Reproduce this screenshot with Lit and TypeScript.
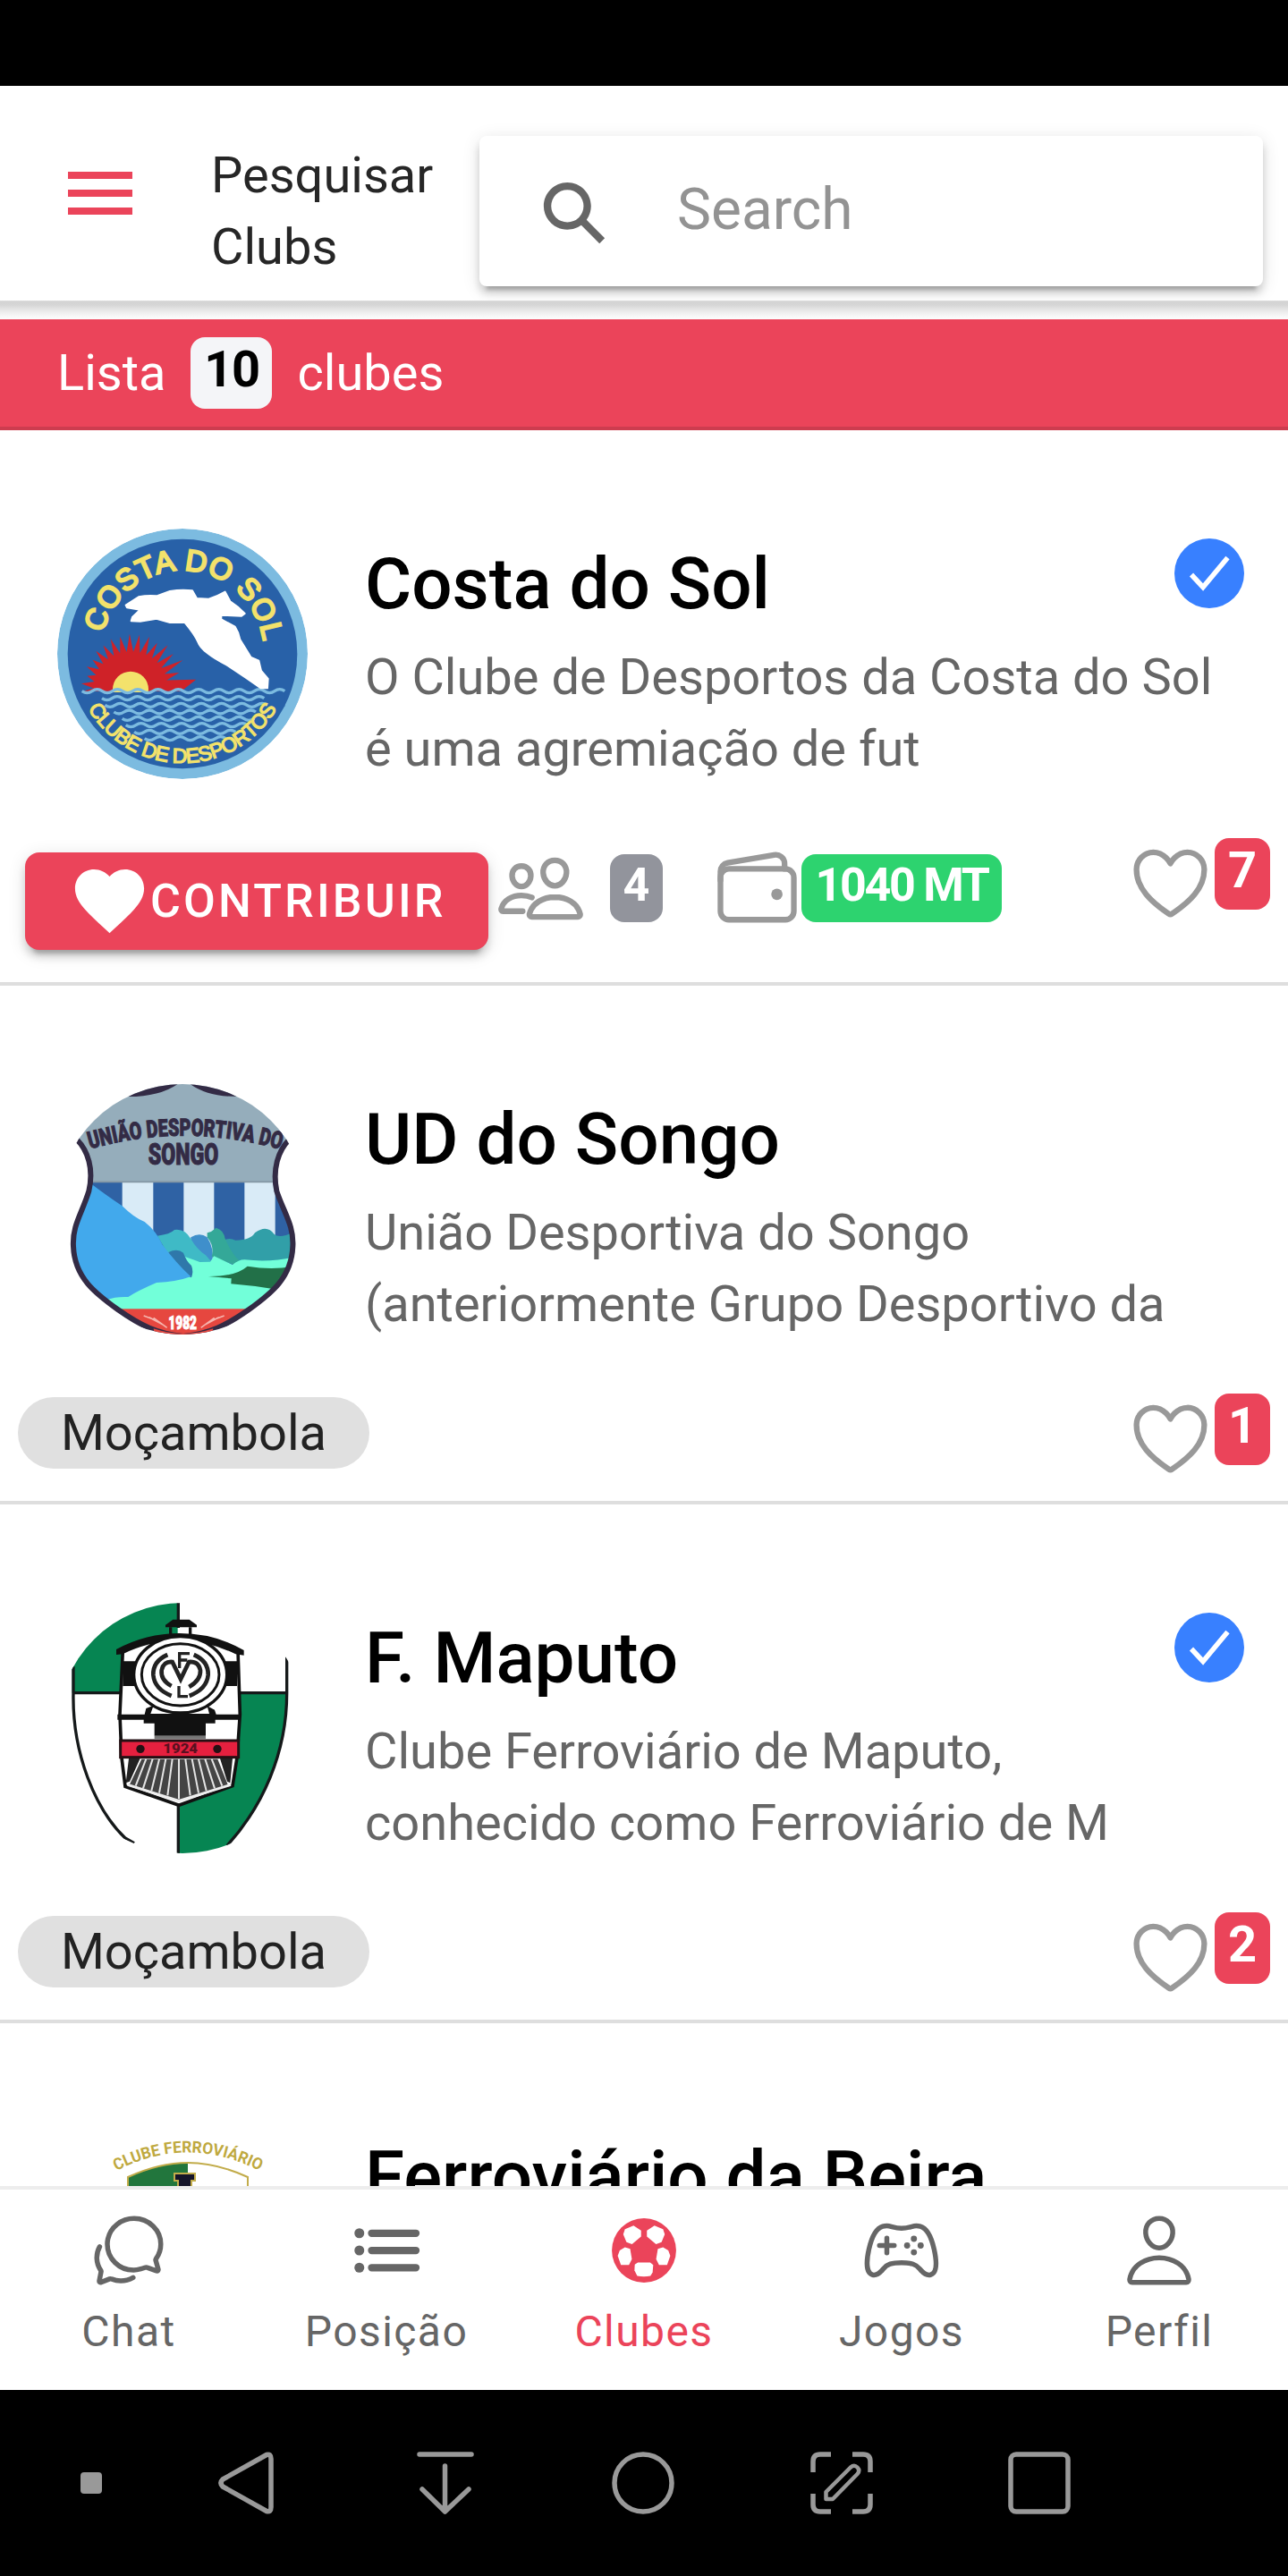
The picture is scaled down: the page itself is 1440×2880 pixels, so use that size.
import { LitElement, html, css, svg, nothing } from "lit";
import type { TemplateResult } from "lit";
import { customElement, property } from "lit/decorators.js";

interface Club {
  name: string;
  lines: string[];
  crest: TemplateResult;
  likes: string;
  verified?: boolean;
  league?: string;
  members?: string;
  balance?: string;
}

const HEART_OUTLINE = svg`<path d="M352.92 80C288 80 256 144 256 144s-32-64-96.92-64c-52.76 0-94.54 44.14-95.08 96.81-1.1 109.33 86.73 187.08 183 252.42a16 16 0 0018 0c96.26-65.34 184.09-143.09 183-252.42-.54-52.67-42.32-96.81-95.08-96.81z"/>`;

const PEOPLE = svg`
  <path d="M402 168c-2.93 40.67-33.1 72-66 72s-63.12-31.32-66-72c-3-42.31 26.37-72 66-72s69 30.46 66 72z"/>
  <path d="M336 304c-65.17 0-127.84 32.37-143.54 95.41-2.08 8.34 3.15 16.59 11.72 16.59h263.65c8.57 0 13.77-8.25 11.72-16.59C463.85 335.36 401.18 304 336 304z"/>
  <path d="M200 185.94c-2.34 32.48-26.72 58.06-53 58.06s-50.7-25.57-53-58.06C91.61 152.15 115.34 128 147 128s55.39 24.77 53 57.94z"/>
  <path d="M206 306c-18.05-8.27-37.93-11.45-59-11.45-52 0-102.1 25.85-114.65 76.2-1.65 6.66 2.53 13.25 9.37 13.25H154"/>`;

const WALLET = svg`
  <rect x="48" y="144" width="416" height="288" rx="48"/>
  <path d="M411.36 144v-30A50 50 0 00352 64.9L88.64 109.85A50 50 0 0048 159v49"/>
  <circle class="solid" cx="368" cy="288" r="32"/>`;

const CHAT = svg`
  <path d="M431 320.6c-1-3.6 1.2-8.6 3.3-12.2a33.68 33.68 0 012.1-3.1A162 162 0 00464 215c.3-92.2-77.5-167-173.7-167-83.9 0-153.9 57.1-170.3 132.9a160.7 160.7 0 00-3.7 34.2c0 92.3 74.8 169.1 171 169.1 15.3 0 35.9-4.6 47.2-7.7s22.5-7.2 25.4-8.3a26.44 26.44 0 019.3-1.7 26 26 0 0110.1 2l56.7 20.1a13.52 13.52 0 003.9 1 8 8 0 008-8 12.85 12.85 0 00-.5-2.7z"/>
  <path d="M66.46 232a146.23 146.23 0 006.39 152.67c2.31 3.49 3.61 6.19 3.21 8s-11.93 61.87-11.93 61.87a8 8 0 002.71 7.68A8.17 8.17 0 0072 464a7.26 7.26 0 002.91-.6l56.21-22a15.7 15.7 0 0112 .2c18.94 7.38 39.88 12 60.83 12A159.21 159.21 0 00284 432.11"/>`;

const LIST = svg`
  <path stroke-width="48" d="M160 144h288M160 256h288M160 368h288"/>
  <circle class="solid" cx="80" cy="144" r="32"/>
  <circle class="solid" cx="80" cy="256" r="32"/>
  <circle class="solid" cx="80" cy="368" r="32"/>`;

const BALL = svg`
  <circle class="solid" cx="256" cy="256" r="209"/>
  <g class="cut">
    <path d="M188 94L237 127V166L178 215L142 202L121 151L132 118Z"/>
    <path d="M324 94L275 127V166L334 215L370 202L391 151L380 118Z"/>
    <path d="M132 236L166 246L177 312L158 350H106L85 291L98 256Z"/>
    <path d="M380 236L346 246L335 312L354 350H406L427 291L414 256Z"/>
    <path d="M216 334H296L316 350L312 398L298 422Q256 430 212 422L194 386L196 348Z"/>
  </g>`;

const GAMEPAD = svg`
  <path d="M467.51 248.83c-18.4-83.18-45.69-136.24-89.43-149.17A91.5 91.5 0 00352 96c-26.89 0-48.11 16-96 16s-69.15-16-96-16a99.09 99.09 0 00-27.2 3.66C89 112.59 61.94 165.7 43.33 248.83c-19 84.91-15.56 152 21.58 164.88 26 9 49.25-9.61 71.27-37 25-31.2 55.79-40.8 119.82-40.8s93.62 9.6 118.66 40.8c22 27.41 46.11 45.79 71.42 37.16 41.02-14.01 40.44-79.13 21.43-165.04z"/>
  <circle class="solid" cx="292" cy="224" r="20"/>
  <circle class="solid" cx="336" cy="268" r="20"/>
  <circle class="solid" cx="336" cy="180" r="20"/>
  <circle class="solid" cx="380" cy="224" r="20"/>
  <path d="M160 176v96M208 224h-96"/>`;

const PERSON = svg`
  <path d="M344 144c-3.92 52.87-44 96-88 96s-84.15-43.12-88-96c-4-55 35-96 88-96s92 42 88 96z"/>
  <path d="M256 304c-87 0-175.3 48-191.64 138.6C62.39 453.52 68.57 464 80 464h352c11.44 0 17.62-10.48 15.65-21.4C431.3 352 343 304 256 304z"/>`;

const line = (shape: unknown, cls = "") =>
  html`<svg class="icon ${cls}" viewBox="0 0 512 512" fill="none" stroke="currentColor" stroke-width="32" stroke-linecap="round" stroke-linejoin="round">${shape}</svg>`;

/* Sun rays: spikes spread over the upper half circle. */
function rays(cx: number, cy: number): string {
  const tips = [222, 172, 200, 185, 192, 178, 186, 183, 184, 178, 180, 172, 172, 160, 165, 152, 166];
  const n = tips.length;
  const pts: string[] = [`${cx + 170},${cy + 8}`];
  tips.forEach((r, i) => {
    const a = ((8 + (i * 166) / (n - 1)) * Math.PI) / 180;
    const b = ((8 + ((i + 0.5) * 166) / (n - 1)) * Math.PI) / 180;
    pts.push(`${(cx + r * Math.cos(a)).toFixed(1)},${(cy - r * Math.sin(a)).toFixed(1)}`);
    pts.push(`${(cx + 124 * Math.cos(b)).toFixed(1)},${(cy - 124 * Math.sin(b)).toFixed(1)}`);
  });
  pts.push(`${cx - 160},${cy + 8}`);
  return pts.join(" ");
}

function wave(x1: number, x2: number, y: number): string {
  let d = `M${x1} ${y}`;
  let up = true;
  for (let x = x1; x < x2; x += 34) {
    d += ` q17 ${up ? 12 : -12} 34 0`;
    up = !up;
  }
  return d;
}

const WAVES: [number, number, number][] = [
  [222, 755, 632], [232, 745, 655], [262, 735, 678], [290, 712, 700],
  [302, 690, 722], [330, 660, 745], [365, 620, 767],
];

const costa = html`<svg class="crest" viewBox="72 63 840 840">
  <circle cx="492" cy="483" r="420" fill="#7cbbe0"/>
  <circle cx="492" cy="483" r="385" fill="#2861a8"/>
  <polygon points=${rays(318, 600)} fill="#cf2228"/>
  <circle cx="318" cy="602" r="60" fill="#f3e26b"/>
  <path d="M150 612H835V660H150Z" fill="#2861a8"/>
  <g fill="none" stroke="#7cbbe0" stroke-width="10">
    <path d="${wave(155, 815, 608)}"/>
    ${WAVES.map(([a, b, y]) => svg`<path d=${wave(a, b, y)}/>`)}
  </g>
  <path fill="#fff" stroke="#fff" stroke-width="6" stroke-linejoin="round" d="M302 320L345 292Q375 286 405 289L450 273Q490 266 525 271L540 297L580 299Q610 290 635 275L652 307Q680 325 701 348L690 356L622 353L622 367L668 392Q680 410 685 435L722 495L748 506L756 540L779 567L777 598L755 598L700 560L640 520Q600 500 575 480Q550 460 545 445Q535 420 500 378L450 378L405 365L350 374L320 373L324 360L350 335L306 328Z"/>
  <path id="costa-top" fill="none" d="M226 414A273 273 0 0 1 764 455"/>
  <path id="costa-low" fill="none" d="M175 666A366 366 0 0 0 809 666"/>
  <g fill="#f3e26b" font-family="Liberation Sans, Arial, sans-serif" stroke="#f3e26b">
    <text font-size="100" stroke-width="7" textLength="760"><textPath href="#costa-top" textLength="760">COSTA DO SOL</textPath></text>
    <text font-size="69" stroke-width="4" textLength="766"><textPath href="#costa-low" textLength="766">CLUBE DE DESPORTOS</textPath></text>
  </g>
</svg>`;

const SHIELD = "M0 160L108 252C145 290 165 350 148 425C125 500 92 540 96 610C100 715 170 768 245 822C320 875 380 905 465 912C550 905 610 875 685 822C760 768 828 715 832 610C836 540 803 500 778 425C763 350 783 290 820 252L930 160";

const songo = html`<svg class="crest" viewBox="42 66 840 840">
  <defs><clipPath id="songo-shield"><path d="${SHIELD}V0H0Z"/></clipPath></defs>
  <g clip-path="url(#songo-shield)">
    <rect width="930" height="930" fill="#95adbb"/>
    <rect x="90" y="395" width="760" height="300" fill="#2f62a4"/>
    <path fill="#d9ebf7" d="M260 395h104v300H260zM466 395h102v300H466zM670 395h103v300H670z"/>
    <path fill="#319fa8" d="M600 590Q620 580 640 590Q690 590 705 565Q745 535 770 570Q790 585 840 560V665H600Z"/>
    <path fill="#3f8fcb" d="M490 580Q520 562 545 580Q570 620 562 665H490Z"/>
    <path fill="#3fbac6" d="M378 575Q420 570 435 555Q470 550 490 585Q510 620 540 640L562 665H430Z"/>
    <path fill="#34a898" d="M545 565Q560 562 575 548Q600 555 605 585Q630 640 655 660L635 672L560 645Q570 610 545 580Z"/>
    <path fill="#72ffd9" d="M200 785L470 645Q500 655 520 663L555 662L568 643L630 672Q650 655 670 655Q760 665 840 645V850H200Z"/>
    <path fill="#2f78aa" d="M415 630Q445 615 465 632Q475 660 492 675Q500 695 492 715L420 690Z"/>
    <path fill="#42a9ec" d="M90 395L155 400Q200 435 260 475Q300 515 335 528Q375 560 395 605Q440 665 490 712Q440 730 375 732Q310 760 280 780Q240 778 205 790L90 790Z"/>
    <path fill="#227048" d="M548 711Q640 712 680 677Q760 690 830 678L780 755Q700 742 625 736L626 718Z"/>
    <rect x="150" y="820" width="630" height="110" fill="#e6473f"/>
    <path d="M150 394H790" stroke="#8496a4" stroke-width="5"/>
    <g stroke="#f6b5ae" stroke-width="5"><path d="M332 843l48 18M350 848l45 24M365 850l45 33M602 843l-48 18M584 848l-45 24M569 850l-45 33"/></g>
  </g>
  <g fill="none" stroke="#332b45" stroke-width="18"><path d="${SHIELD}"/></g>
  <path fill="#332b45" d="M262 108Q380 112 446 66H250ZM668 108Q550 112 488 66H690Z"/>
  <path fill="#e6473f" d="M365 886Q465 920 565 886L560 912H370Z"/>
  <path id="songo-arc" fill="none" d="M152 284Q465 194 786 284"/>
  <g fill="#332b45" stroke="#332b45" stroke-width="3" font-family="Roboto, sans-serif" font-weight="900">
    <text font-size="80" textLength="648" lengthAdjust="spacingAndGlyphs"><textPath href="#songo-arc" textLength="648" lengthAdjust="spacingAndGlyphs">UNIÃO DESPORTIVA DO</textPath></text>
    <text x="347" y="337" font-size="98" textLength="236" lengthAdjust="spacingAndGlyphs">SONGO</text>
  </g>
  <text x="415" y="887" fill="#fff" stroke="#fff" stroke-width="3" font-family="Roboto, sans-serif" font-weight="900" font-size="60" textLength="95" lengthAdjust="spacingAndGlyphs">1982</text>
</svg>`;

const maputo = html`<svg class="crest" viewBox="42 66 840 840">
  <path fill="#068552" d="M42 66H446V368H92V290L42 290Z"/>
  <path fill="#068552" d="M446 368H810C812 560 730 740 615 880L600 910H446Z"/>
  <g fill="none" stroke="#15191a" stroke-width="10">
    <path d="M96 280V370C92 570 170 760 270 855L300 872"/>
    <path d="M812 225V370C812 570 730 750 612 880"/>
    <path d="M96 368H262M650 368H812M448 40V150M448 740V920"/>
  </g>
  <path fill="#fff" stroke="#111" stroke-width="11" d="M262 225L340 192Q450 170 570 192L648 225L655 440L645 585L630 680L450 745L270 682L258 585L252 440Z"/>
  <path fill="#111" d="M240 222Q340 168 452 168Q570 168 668 225V242L640 238Q560 198 452 190Q340 198 262 238L240 240ZM262 262H312V345H262ZM598 262H645V345H598ZM405 140L430 122H485L510 140V148H405Z"/>
  <path fill="none" stroke="#111" stroke-width="10" d="M422 148V180M488 148V180"/>
  <ellipse cx="455" cy="307" rx="156" ry="128" fill="#fff" stroke="#111" stroke-width="10"/>
  <ellipse cx="455" cy="307" rx="130" ry="104" fill="none" stroke="#111" stroke-width="9"/>
  <g fill="none" stroke="#222" stroke-width="14">
    <path d="M412 240Q362 262 364 308Q368 355 425 378M500 240Q550 262 548 308Q544 355 485 378"/>
    <path d="M425 345Q388 325 392 292Q398 262 428 264L456 322L484 264Q516 262 522 292Q524 325 484 348"/>
    <path stroke-width="10" d="M452 285V236H486M454 258H478M450 345V380H480"/>
  </g>
  <path fill="#111" d="M340 420L365 410L355 438H552L545 412L570 425L575 440H655V458H572V470H540V512H368V470H332V458H244V440H335Z"/>
  <path fill="#777" d="M368 512H540V522H368Z"/>
  <rect x="254" y="528" width="396" height="56" fill="#e6203f" stroke="#251014" stroke-width="9"/>
  <circle cx="321" cy="556" r="14" fill="#251014"/><circle cx="579" cy="556" r="14" fill="#251014"/>
  <text x="397" y="571" font-family="Roboto, sans-serif" font-weight="900" font-size="44" fill="#5a1020" textLength="116" lengthAdjust="spacingAndGlyphs">1924</text>
  <path fill="#222" d="M282 588H320L285 665L272 670ZM588 588H630L622 670L612 665Z"/>
  <path fill="#444" d="M325 590H580L615 678L450 728L285 675Z"/>
  <g stroke="#e4e4e4" stroke-width="6"><path d="M340 590L305 680M362 590L330 688M384 590L358 696M406 590L384 704M428 590L412 712M450 590V724M472 590L488 712M494 590L516 704M516 590L542 696M538 590L570 688M560 590L595 680"/></g>
  <path fill="none" stroke="#eee" stroke-width="9" d="M278 676L450 730L624 676"/>
</svg>`;

const beira = html`<svg class="crest" viewBox="64 2372 280 280">
  <path fill="#fff" d="M143 2434Q178 2418 210 2418Q242 2418 277 2434V2520H143Z"/>
  <path fill="#22763d" d="M143 2434Q178 2418 210 2418V2520H143Z"/>
  <path fill="none" stroke="#c2ac4b" stroke-width="2" d="M143 2520V2434Q178 2418 210 2418Q242 2418 277 2434V2520"/>
  <path fill="#15152a" stroke="#c2ac4b" stroke-width="2" d="M195 2430H218V2438H214V2480H199V2438H195Z"/>
  <path id="beira-arc" fill="none" d="M130 2427Q210 2386 290 2427"/>
  <text fill="#bfa93f" font-family="Roboto, sans-serif" font-weight="700" font-size="18" textLength="167" lengthAdjust="spacingAndGlyphs"><textPath href="#beira-arc" textLength="167" lengthAdjust="spacingAndGlyphs">CLUBE FERROVIÁRIO</textPath></text>
</svg>`;

const CLUBS: Club[] = [
  {
    name: "Costa do Sol",
    lines: ["O Clube de Desportos da Costa do Sol", "é uma agremiação de fut"],
    crest: costa, likes: "7", verified: true, members: "4", balance: "1040 MT",
  },
  {
    name: "UD do Songo",
    lines: ["União Desportiva do Songo", "(anteriormente Grupo Desportivo da"],
    crest: songo, likes: "1", league: "Moçambola",
  },
  {
    name: "F. Maputo",
    lines: ["Clube Ferroviário de Maputo,", "conhecido como Ferroviário de M"],
    crest: maputo, likes: "2", verified: true, league: "Moçambola",
  },
  { name: "Ferroviário da Beira", lines: [], crest: beira, likes: "" },
];

const TABS = [
  { label: "Chat", icon: CHAT },
  { label: "Posição", icon: LIST },
  { label: "Clubes", icon: BALL, active: true },
  { label: "Jogos", icon: GAMEPAD },
  { label: "Perfil", icon: PERSON },
];

@customElement("club-item")
export class ClubItem extends LitElement {
  @property({ attribute: false }) club!: Club;

  static styles = css`
    :host { display: flex; flex-direction: column; flex: none; box-sizing: border-box; height: 580px; border-bottom: 4px solid #dedede; background: #fff; }
    :host(.tall) { height: 621px; }
    .top { display: flex; align-items: flex-start; box-sizing: border-box; height: 456px; flex: none; padding: 110px 49px 0 64px; }
    .crest { display: block; flex: none; width: 280px; height: 280px; border-radius: 50%; overflow: hidden; }
    .text { margin: 14px 0 0 64px; white-space: nowrap; width: 905px; flex: none; }
    .name { font-size: 80px; font-weight: 500; line-height: 96px; color: #000; }
    .desc { margin-top: 16px; font-size: 56px; line-height: 80px; color: #666; }
    .check { flex: none; width: 78px; height: 78px; margin-top: 11px; }
    .row { display: flex; align-items: flex-start; padding: 0 20px; }
    .icon { display: block; flex: none; width: 101px; height: 101px; color: #999; }
    .solid { fill: currentColor; stroke: none; }
    .members { margin: 6px 27px 0 8px; }
    .wallet { margin: 6px 0 0 55px; }
    .like { margin-left: auto; margin-right: -1px; }
    .contribute { display: flex; align-items: center; box-sizing: border-box; flex: none; width: 518px; height: 109px; margin: 16px 0 0 8px; padding-left: 47px; border-radius: 16px; background: #eb445a; color: #fff; font-size: 52px; font-weight: 500; letter-spacing: 3.12px;
      box-shadow: 0 12px 4px -8px rgba(0,0,0,.2), 0 8px 8px rgba(0,0,0,.14), 0 4px 20px rgba(0,0,0,.12); }
    .heart { display: block; width: 95px; height: 95px; margin-right: -2px; }
    .badge { box-sizing: border-box; flex: none; height: 80px; width: 62px; border-radius: 16px; text-align: center; color: #fff; background: #eb445a; font-size: 56px; font-weight: 700; line-height: 72px; white-space: nowrap; }
    .small { height: 76px; font-size: 52px; line-height: 69px; margin-top: 18px; }
    .gray { background: #92949c; width: 59px; }
    .green { background: #2dd36f; width: 224px; margin-left: -1px; letter-spacing: -2.3px; }
    .chip { box-sizing: border-box; height: 80px; width: 393px; margin-top: 4px; border-radius: 40px; background: #e0e0e0; color: #222; font-size: 56px; line-height: 80px; text-align: center; }
  `;

  render() {
    const c = this.club;
    return html`
      <div class="top">
        ${c.crest}
        <div class="text">
          <div class="name">${c.name}</div>
          <div class="desc">${c.lines.map((l) => html`<div>${l}</div>`)}</div>
        </div>
        ${c.verified
          ? html`<svg class="check" viewBox="0 0 78 78"><circle cx="39" cy="39" r="39" fill="#3880ff"/><path d="M19 40.5L32 54.5L59.5 21.5" fill="none" stroke="#fff" stroke-width="5.6"/></svg>`
          : nothing}
      </div>
      ${c.likes
        ? html`<div class="row">
            ${c.balance
              ? html`<div class="contribute">
                    <svg class="heart" viewBox="0 0 512 512" fill="currentColor"><path d="M256 448l-30.164-27.211C118.718 322.442 48 258.61 48 179.095 48 114.221 97.918 64 162.4 64c36.399 0 70.717 16.742 93.6 43.947C278.882 80.742 313.199 64 349.6 64 414.082 64 464 114.221 464 179.095c0 79.516-70.719 143.348-177.836 241.694L256 448z"/></svg>
                    <span>CONTRIBUIR</span>
                  </div>
                  ${line(PEOPLE, "members")}
                  <div class="badge small gray">${c.members}</div>
                  ${line(WALLET, "wallet")}
                  <div class="badge small green">${c.balance}</div>`
              : html`<div class="chip">${c.league}</div>`}
            ${line(HEART_OUTLINE, "like")}
            <div class="badge">${c.likes}</div>
          </div>`
        : nothing}
    `;
  }
}

@customElement("app-root")
export class AppRoot extends LitElement {
  static styles = css`
    :host { display: flex; flex-direction: column; width: 1440px; height: 2880px; overflow: hidden; background: #fff; font-family: Roboto, "Noto Sans", sans-serif; }
    .status { flex: none; height: 96px; background: #000; }
    .header { display: flex; align-items: flex-start; flex: none; box-sizing: border-box; height: 240px; padding: 56px 28px 0 64px; overflow: hidden; background: #fff; }
    .menu { flex: none; width: 96px; height: 96px; margin-top: 16px; color: #eb445a; }
    .title { flex: none; width: 250px; margin: 4px 0 0 76px; font-size: 56px; line-height: 80px; color: #262626; }
    .search { display: flex; align-items: center; flex: none; box-sizing: border-box; width: 876px; height: 168px; margin-left: auto; padding-left: 64px; gap: 73px; border-radius: 8px; background: #fff; color: #939393; font-size: 64px; line-height: 76px;
      box-shadow: 0 12px 4px -8px rgba(0,0,0,.2), 0 8px 8px rgba(0,0,0,.14), 0 4px 20px rgba(0,0,0,.12); }
    .search span { margin-bottom: 2px; }
    .lens { width: 84px; height: 84px; color: #666; margin-top: 3px; }
    .shade { flex: none; height: 21px; background: linear-gradient(#dcdcdc 0, #d3d3d3 2px, #d6d6d6 5px, #ebebeb 12px, #fafafa 19px, #fcfcfc 21px); }
    .count { display: flex; align-items: center; flex: none; box-sizing: border-box; height: 124px; padding-left: 64px; border-bottom: 4px solid #cd3c4f; background: #eb445a; color: #fff; font-size: 56px; line-height: 80px; }
    .total { box-sizing: border-box; width: 91px; height: 80px; margin: 0 28px 0 28px; border-radius: 16px; background: #f4f5f8; color: #000; font-weight: 700; line-height: 72px; text-align: center; letter-spacing: -1.5px; }
    .list { display: flex; flex-direction: column; flex: 1; min-height: 0; overflow: hidden; }
    .tabs { display: grid; grid-template-columns: repeat(5, 1fr); flex: none; box-sizing: border-box; height: 228px; border-top: 4px solid #ededed; background: #fff; }
    .tab { display: flex; flex-direction: column; align-items: center; padding-top: 24px; color: #666; font-size: 48px; line-height: 56px; letter-spacing: 1.44px; }
    .active { color: #eb445a; }
    .icon { display: block; flex: none; width: 88px; height: 88px; margin-bottom: 19px; }
    .solid { fill: currentColor; stroke: none; }
    .cut { fill: #fff; stroke: none; }
    .nav { display: flex; align-items: center; flex: none; gap: 141.4px; box-sizing: border-box; height: 208px; padding-left: 62px; background: #000; }
    .key { display: block; flex: none; width: 80px; height: 80px; }
    .first { margin-right: -47px; }
  `;

  private key(shape: unknown, cls = "") {
    return html`<svg class="key ${cls}" viewBox="0 0 80 80" fill="none" stroke="#999" stroke-width="5.5" stroke-linecap="round" stroke-linejoin="round">${shape}</svg>`;
  }

  render() {
    return html`
      <div class="status"></div>
      <header class="header">
        <svg class="menu" viewBox="0 0 96 96" fill="currentColor"><path d="M12 24h72v8H12zM12 44h72v8H12zM12 64h72v8H12z"/></svg>
        <div class="title">Pesquisar Clubs</div>
        <div class="search">
          <svg class="lens" viewBox="0 0 512 512" fill="currentColor"><path d="M464 428L339.92 303.9a160.48 160.48 0 0030.72-94.58C370.64 120.37 298.27 48 209.32 48S48 120.37 48 209.32s72.37 161.32 161.32 161.32a160.48 160.48 0 0094.58-30.72L428 464zM209.32 319.69a110.38 110.38 0 11110.37-110.37 110.5 110.5 0 01-110.37 110.37z"/></svg>
          <span>Search</span>
        </div>
      </header>
      <div class="shade"></div>
      <div class="count"><span>Lista</span><span class="total">10</span><span>clubes</span></div>
      <main class="list">
        ${CLUBS.map((c) => html`<club-item class=${c.balance ? "tall" : ""} .club=${c}></club-item>`)}
      </main>
      <nav class="tabs">
        ${TABS.map((t) => html`<div class="tab ${t.active ? "active" : ""}">${line(t.icon)}<span>${t.label}</span></div>`)}
      </nav>
      <div class="nav">
        ${this.key(svg`<rect x="28" y="28" width="24" height="24" rx="4" fill="#999" stroke="none"/>`, "first")}
        ${this.key(svg`<path d="M62 8.5L13 36Q9 40 13 44L62 71.500Q67 73 67 67V13Q67 7 62 8.500Z"/>`)}
        ${this.key(svg`<path d="M11 8H69M39.500 21V72M14 47L39.500 72L66 47"/>`)}
        ${this.key(svg`<circle cx="40" cy="40" r="32"/>`)}
        ${this.key(svg`<path stroke-linecap="butt" d="M8 28V16Q8 8 16 8H28M52 8H64Q72 8 72 16V28M72 52V64Q72 72 64 72H52M28 72H16Q8 72 8 64V52"/><path d="M22.500 58V50L50 22.500Q54 19 57.500 22.500Q61 26 57.500 30L30 58Z" stroke-width="4.500"/>`)}
        ${this.key(svg`<rect x="8" y="8" width="64" height="64" rx="6"/>`)}
      </div>
    `;
  }
}
